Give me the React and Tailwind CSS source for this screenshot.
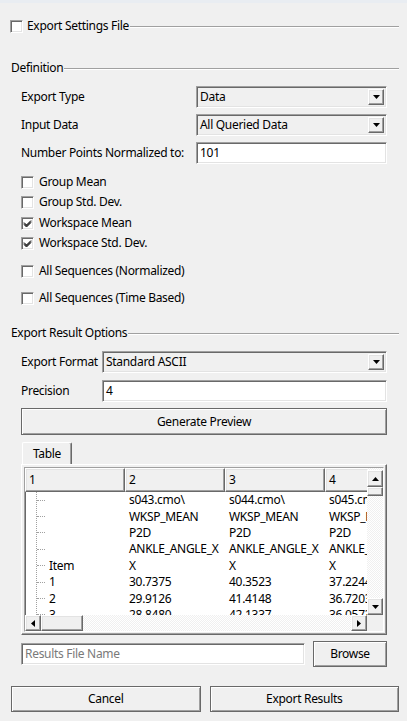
import React from "react";

const raised = "border border-t-white border-l-white border-r-[#696969] border-b-[#696969] shadow-[inset_-1px_-1px_0_#a0a0a0,inset_1px_1px_0_#e3e3e3] bg-[#f0f0f0]";
const sunken = "border border-t-[#a0a0a0] border-l-[#a0a0a0] border-r-white border-b-white shadow-[inset_1px_1px_0_#696969,inset_-1px_-1px_0_#e3e3e3]";

function Check({ checked }) {
  return (
    <div className={`w-[13px] h-[13px] bg-white ${sunken} flex items-center justify-center shrink-0`}>
      {checked && (
        <svg width="9" height="9" viewBox="0 0 9 9">
          <path d="M1 3.5 L3.5 6 L8 1.5 M1 4.5 L3.5 7 L8 2.5 M1 5.5 L3.5 8 L8 3.5" stroke="#000" strokeWidth="1" fill="none" />
        </svg>
      )}
    </div>
  );
}

function Arrow({ dir = "down" }) {
  const paths = {
    down: "M0 0 L7 0 L3.5 4 Z",
    up: "M0 4 L7 4 L3.5 0 Z",
    left: "M4 0 L4 7 L0 3.5 Z",
    right: "M0 0 L0 7 L4 3.5 Z",
  };
  const w = dir === "left" || dir === "right" ? 4 : 7;
  const h = dir === "left" || dir === "right" ? 7 : 4;
  return (
    <svg width={w} height={h} viewBox={`0 0 ${w} ${h}`}>
      <path d={paths[dir]} fill="#000" />
    </svg>
  );
}

function Combo({ value, className = "" }) {
  return (
    <div className={`h-[22px] ${sunken} bg-[#f0f0f0] flex items-center pl-[3px] pr-[2px] ${className}`}>
      <span className="flex-1">{value}</span>
      <div className={`w-[16px] h-[16px] ${raised} flex items-center justify-center`}>
        <Arrow dir="down" />
      </div>
    </div>
  );
}

function Input({ value, className = "", placeholder }) {
  return (
    <div className={`h-[22px] ${sunken} bg-white flex items-center pl-[3px] ${className}`}>
      {value ? <span>{value}</span> : <span className="text-[#7a7a7a]">{placeholder}</span>}
    </div>
  );
}

function GroupTitle({ children, className = "" }) {
  return (
    <div className={`flex items-center ${className}`}>
      {children}
      <div className="flex-1 h-px bg-[#a0a0a0] ml-[1px] shadow-[0_1px_0_#fff]" />
    </div>
  );
}

function CheckRow({ label, checked, className = "" }) {
  return (
    <div className={`flex items-center h-[16px] pl-[21px] ${className}`}>
      <Check checked={checked} />
      <span className="ml-[5px]">{label}</span>
    </div>
  );
}

const rows = [
  ["", "s043.cmo\\", "s044.cmo\\", "s045.cmo\\"],
  ["", "WKSP_MEAN", "WKSP_MEAN", "WKSP_MEAN"],
  ["", "P2D", "P2D", "P2D"],
  ["", "ANKLE_ANGLE_X", "ANKLE_ANGLE_X", "ANKLE_ANGLE_X"],
  ["Item", "X", "X", "X"],
  ["1", "30.7375", "40.3523", "37.2244"],
  ["2", "29.9126", "41.4148", "36.7203"],
  ["3", "28.8480", "42.1337", "36.0573"],
];

const dither = "bg-[repeating-conic-gradient(#f0f0f0_0_25%,#ffffff_0_50%)] bg-[length:2px_2px]";
const btn = "border border-[#696969] bg-[#f0f0f0] shadow-[inset_1px_1px_0_#fff,inset_-1px_-1px_0_#a0a0a0] flex items-center justify-center";

function TablePane() {
  return (
    <div className="ml-[21px] w-[366px]">
      <div className="flex">
        <div className="ml-[1px] w-[50px] h-[22px] border border-b-0 border-t-white border-l-white border-r-[#696969] shadow-[inset_-1px_0_0_#a0a0a0] rounded-t-[2px] flex items-center justify-center bg-[#f0f0f0]">
          Table
        </div>
      </div>
      <div className="h-[171px] border border-t-white border-l-white border-r-[#696969] border-b-[#696969] shadow-[inset_-1px_-1px_0_#a0a0a0] p-[2px]">
        <div className={`h-full ${sunken} bg-white flex flex-col overflow-hidden`}>
          <div className="flex flex-1 min-h-0">
            <div className="flex-1 min-w-0 overflow-hidden flex flex-col">
              <div className="flex h-[24px] shrink-0">
                {["1", "2", "3", "4"].map((h) => (
                  <div key={h} className={`w-[100px] shrink-0 h-full ${raised} flex items-center pl-[3px]`}>{h}</div>
                ))}
              </div>
              <div className="relative flex-1 overflow-hidden">
                <div className="absolute left-[11px] top-0 bottom-0 border-l border-dotted border-[#a0a0a0]" />
                {rows.map((r, i) => (
                  <div key={i} className="flex h-[16.4px] items-center whitespace-nowrap">
                    <div className="w-[100px] shrink-0 flex items-center">
                      <div className="w-[8px] ml-[12px] border-t border-dotted border-[#a0a0a0]" />
                      <span className="ml-[4px]">{r[0]}</span>
                    </div>
                    <div className="w-[100px] shrink-0 pl-[4px] overflow-hidden">{r[1]}</div>
                    <div className="w-[100px] shrink-0 pl-[4px] overflow-hidden">{r[2]}</div>
                    <div className="w-[100px] shrink-0 pl-[4px] overflow-hidden">{r[3]}</div>
                  </div>
                ))}
              </div>
            </div>
            <div className={`w-[16px] shrink-0 flex flex-col ${dither}`}>
              <div className={`h-[17px] ${raised} flex items-center justify-center mt-[2px]`}><Arrow dir="up" /></div>
              <div className={`h-[9px] ${raised}`} />
              <div className="flex-1" />
              <div className={`h-[17px] ${raised} flex items-center justify-center`}><Arrow dir="down" /></div>
            </div>
          </div>
          <div className="flex h-[16px] shrink-0">
            <div className={`flex-1 flex ${dither}`}>
              <div className={`w-[16px] ${raised} flex items-center justify-center`}><Arrow dir="left" /></div>
              <div className={`w-[42px] ${raised}`} />
              <div className="flex-1" />
              <div className={`w-[16px] ${raised} flex items-center justify-center`}><Arrow dir="right" /></div>
            </div>
            <div className="w-[16px] bg-[#f0f0f0]" />
          </div>
        </div>
      </div>
    </div>
  );
}

export default function App() {
  return (
    <div
      className="w-[407px] h-[721px] bg-[#f0f0f0] text-black text-[12px] leading-none tracking-[-0.3px] overflow-hidden flex flex-col"
      style={{ fontFamily: '"Noto Sans", "Open Sans", sans-serif' }}
    >
      <div className="h-[3px] bg-[#e9edf2] shrink-0" />
      <GroupTitle className="h-[16px] mt-[15px] pl-[10px] pr-[8px]">
        <Check />
        <span className="ml-[4px]">Export Settings File</span>
      </GroupTitle>

      <GroupTitle className="h-[16px] mt-[26px] pl-[11px] pr-[8px]">
        <span>Definition</span>
      </GroupTitle>

      <div className="flex items-center mt-[10px] h-[22px] pl-[21px] pr-[20px]">
        <span className="w-[175px]">Export Type</span>
        <Combo value="Data" className="flex-1" />
      </div>
      <div className="flex items-center mt-[6px] h-[22px] pl-[21px] pr-[20px]">
        <span className="w-[175px]">Input Data</span>
        <Combo value="All Queried Data" className="flex-1" />
      </div>
      <div className="flex items-center mt-[6px] h-[22px] pl-[21px] pr-[20px]">
        <span className="w-[175px]">Number Points Normalized to:</span>
        <Input value="101" className="flex-1" />
      </div>

      <CheckRow label="Group Mean" className="mt-[10px]" />
      <CheckRow label="Group Std. Dev." className="mt-[4px]" />
      <CheckRow label="Workspace Mean" checked className="mt-[5px]" />
      <CheckRow label="Workspace Std. Dev." checked className="mt-[4px]" />
      <CheckRow label="All Sequences (Normalized)" className="mt-[12px]" />
      <CheckRow label="All Sequences (Time Based)" className="mt-[11px]" />

      <GroupTitle className="h-[16px] mt-[19px] pl-[11px] pr-[8px]">
        <span>Export Result Options</span>
      </GroupTitle>

      <div className="flex items-center mt-[10px] h-[22px] pl-[21px] pr-[20px]">
        <span className="w-[81px]">Export Format</span>
        <Combo value="Standard ASCII" className="flex-1" />
      </div>
      <div className="flex items-center mt-[7px] h-[22px] pl-[21px] pr-[20px]">
        <span className="w-[81px]">Precision</span>
        <Input value="4" className="flex-1" />
      </div>
      <div className={`mt-[6px] h-[27px] ml-[21px] mr-[20px] ${btn}`}>
        Generate Preview
      </div>

      <div className="mt-[7px]">
        <TablePane />
      </div>

      <div className="flex items-center mt-[6px] h-[26px] pl-[21px] pr-[20px]">
        <Input placeholder="Results File Name" className="w-[284px]" />
        <div className={`ml-[8px] flex-1 h-[26px] ${btn}`}>
          Browse
        </div>
      </div>

      <div className="flex mt-[19px] h-[26px] pl-[11px] pr-[8px] gap-[9px]">
        <div className={`flex-1 ${btn}`}>Cancel</div>
        <div className={`flex-1 ${btn}`}>Export Results</div>
      </div>
    </div>
  );
}
